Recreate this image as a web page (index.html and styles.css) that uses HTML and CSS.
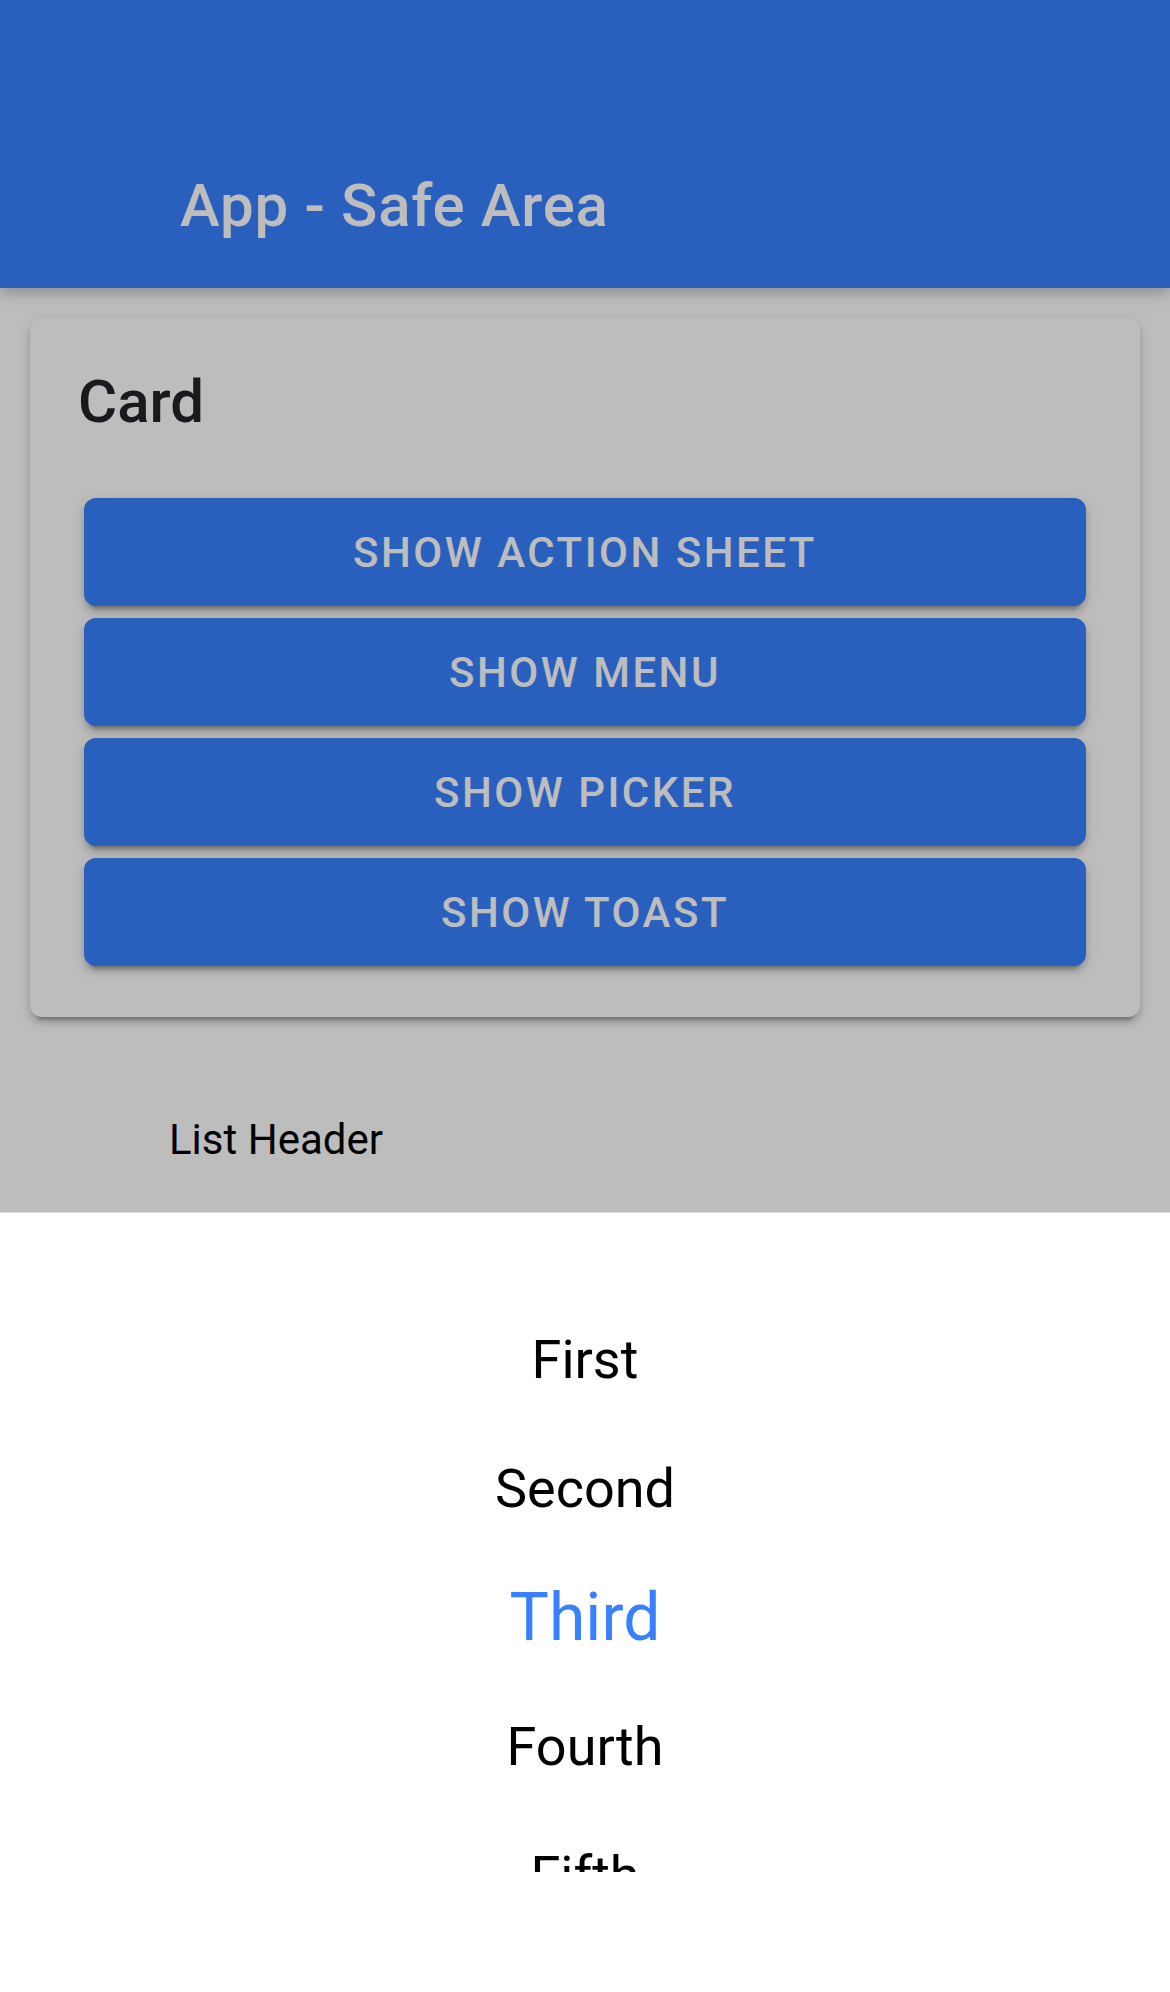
FILE: index.html
```html
<!DOCTYPE html>
<html lang="en">
<head>
<meta charset="utf-8">
<title>App - Safe Area</title>
<link rel="stylesheet" href="styles.css">
</head>
<body>
<div class="app">
  <header class="toolbar">
    <h1 class="toolbar-title">App - Safe Area</h1>
  </header>
  <main class="content">
    <section class="card">
      <div class="card-header">
        <h2 class="card-title">Card</h2>
      </div>
      <div class="card-content">
        <button class="btn">Show Action Sheet</button>
        <button class="btn">Show Menu</button>
        <button class="btn">Show Picker</button>
        <button class="btn">Show Toast</button>
      </div>
    </section>
    <div class="list-header">List Header</div>
  </main>
  <div class="backdrop"></div>
  <div class="picker">
    <div class="picker-col">
      <div class="opt">First</div>
      <div class="opt">Second</div>
      <div class="opt opt-selected">Third</div>
      <div class="opt">Fourth</div>
      <div class="opt">Fifth</div>
    </div>
  </div>
</div>
</body>
</html>
```
FILE: styles.css
```css
html, body {
  margin: 0;
  padding: 0;
}
body {
  font-family: Roboto, "Liberation Sans", Arial, sans-serif;
  background: #ffffff;
}
.app {
  position: relative;
  width: 1170px;
  height: 1992px;
  overflow: hidden;
  background: #ffffff;
}
.toolbar {
  height: 288px;
  padding-top: 120px;
  box-sizing: border-box;
  background: #3880ff;
  display: flex;
  align-items: center;
  box-shadow: 0 6px 12px rgba(0,0,0,0.22);
  position: relative;
  z-index: 1;
}
.toolbar-title {
  margin: 0;
  padding: 2px 0 0 180px;
  font-size: 60px;
  font-weight: 500;
  color: #ffffff;
  letter-spacing: 0.7px;
}
.content {
  display: flex;
  flex-direction: column;
}
.card {
  margin: 30px 30px 30px 30px;
  background: #ffffff;
  border-radius: 12px;
  box-shadow: 0 9px 3px -6px rgba(0,0,0,0.2), 0 6px 6px 0 rgba(0,0,0,0.14), 0 3px 15px 0 rgba(0,0,0,0.12);
}
.card-header {
  padding: 48px 48px 48px 48px;
}
.card-title {
  margin: 0;
  font-size: 60px;
  line-height: 72px;
  font-weight: 500;
  color: #222428;
}
.card-content {
  display: flex;
  flex-direction: column;
  gap: 12px;
  padding: 12px 54px 51px 54px;
}
.btn {
  height: 108px;
  border: none;
  border-radius: 12px;
  background: #3880ff;
  color: #ffffff;
  font-family: Roboto, "Liberation Sans", Arial, sans-serif;
  font-size: 42px;
  font-weight: 500;
  letter-spacing: 2.5px;
  text-transform: uppercase;
  display: flex;
  align-items: center;
  justify-content: center;
  box-shadow: 0 9px 3px -6px rgba(0,0,0,0.2), 0 6px 6px 0 rgba(0,0,0,0.14), 0 3px 15px 0 rgba(0,0,0,0.12);
}
.list-header {
  padding: 68px 0 0 169px;
  font-size: 42px;
  line-height: 50px;
  color: #000000;
}
.backdrop {
  position: absolute;
  inset: 0;
  background: rgba(0,0,0,0.26);
  z-index: 2;
}
.picker {
  position: absolute;
  left: 0;
  right: 0;
  top: 1212px;
  bottom: 0;
  background: #ffffff;
  border-top: 1px solid #dedede;
  z-index: 3;
}
.picker-col {
  height: 659px;
  padding-top: 82px;
  box-sizing: border-box;
  overflow: hidden;
  display: flex;
  flex-direction: column;
  align-items: center;
}
.opt {
  height: 129px;
  line-height: 129px;
  flex: none;
  font-size: 54px;
  color: #000000;
  text-align: center;
}
.opt-selected {
  font-size: 66px;
  color: #3880ff;
}
```
